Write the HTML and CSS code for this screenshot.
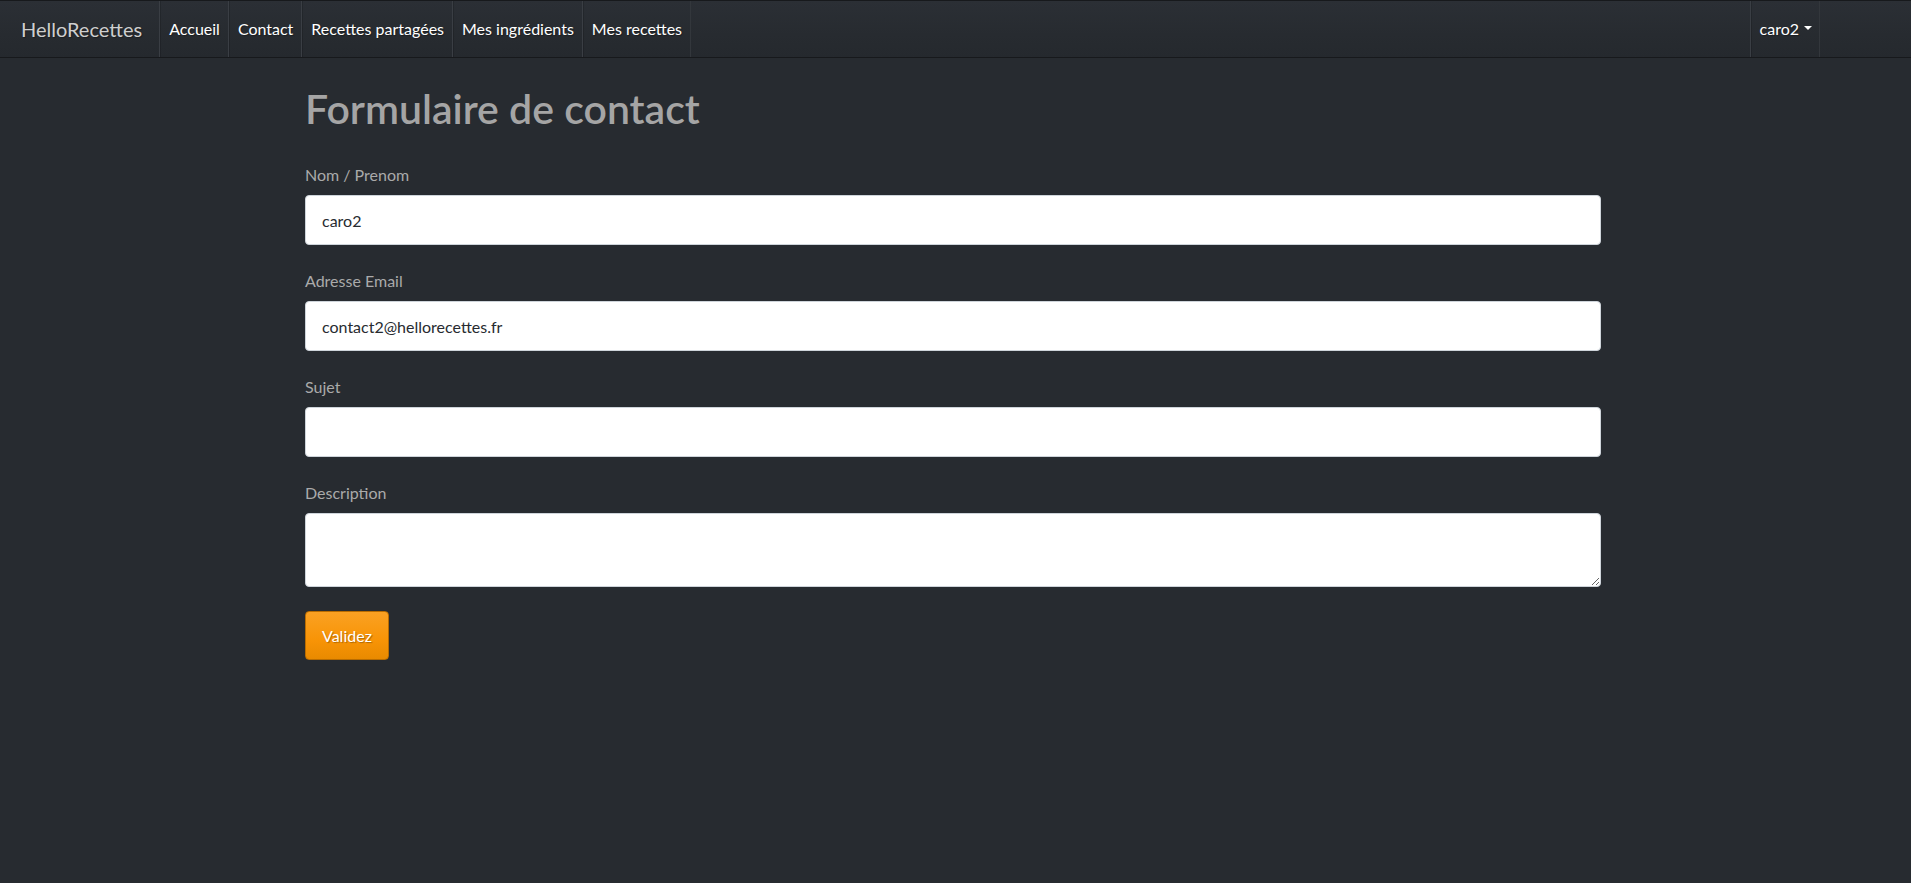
FILE: index.html
```html
<!DOCTYPE html>
<html lang="fr">
<head>
<meta charset="utf-8">
<title>Formulaire de contact</title>
<link rel="stylesheet" href="styles.css">
</head>
<body>
<nav class="navbar">
  <a class="brand" href="#">HelloRecettes</a>
  <ul class="nav">
    <li><a class="nav-link" href="#">Accueil</a></li>
    <li><a class="nav-link" href="#">Contact</a></li>
    <li><a class="nav-link" href="#">Recettes partagées</a></li>
    <li><a class="nav-link" href="#">Mes ingrédients</a></li>
    <li><a class="nav-link last" href="#">Mes recettes</a></li>
  </ul>
  <ul class="nav nav-right">
    <li><a class="nav-link last dropdown" href="#">caro2<span class="caret"></span></a></li>
  </ul>
</nav>
<main class="page">
  <div class="container">
    <h1 class="title">Formulaire de contact</h1>
    <form class="form">
      <div class="group">
        <label class="label" for="nom">Nom / Prenom</label>
        <input class="control" id="nom" type="text" value="caro2">
      </div>
      <div class="group">
        <label class="label" for="email">Adresse Email</label>
        <input class="control" id="email" type="email" value="contact2@hellorecettes.fr">
      </div>
      <div class="group">
        <label class="label" for="sujet">Sujet</label>
        <input class="control" id="sujet" type="text">
      </div>
      <div class="group">
        <label class="label" for="desc">Description</label>
        <textarea class="control area" id="desc" rows="2"></textarea>
      </div>
      <button class="btn-warning" type="submit">Validez</button>
    </form>
  </div>
</main>
</body>
</html>
```

FILE: styles.css
```css
* { box-sizing: border-box; }
html, body { margin: 0; padding: 0; }
body {
  background: #272b30;
  color: #aaa;
  font-family: "Lato", "Open Sans", "DejaVu Sans", sans-serif;
  font-size: 16px;
  line-height: 1.5;
  min-height: 883px;
}
.navbar {
  display: flex;
  align-items: stretch;
  height: 58px;
  border-top: 1px solid #17191c;
  border-bottom: 1px solid #17191c;
  background: linear-gradient(#2b2f35, #272b30 60%, #25292e);
  padding-left: 21px;
  padding-right: 91px;
  text-shadow: 1px 1px 1px rgba(0,0,0,.3);
}
.brand {
  display: flex;
  align-items: center;
  font-size: 20px;
  line-height: 30px;
  color: #cfcfcf;
  text-decoration: none;
  margin-right: 17px;
}
.nav {
  display: flex;
  list-style: none;
  margin: 0;
  padding: 0;
}
.nav li { display: flex; }
.nav-right { margin-left: auto; }
.nav-link {
  display: flex;
  align-items: center;
  padding: 0 8px 0 9px;
  color: #fff;
  text-decoration: none;
  border-left: 1px solid #3a3e44;
  box-shadow: inset 1px 0 0 rgba(0,0,0,.15);
}
.nav-link.last { border-right: 1px solid #33373c; }
.dropdown { padding: 0 7px 0 9px; }
.caret {
  display: inline-block;
  margin-left: 5px;
  width: 0;
  height: 0;
  border-top: 4.5px solid #fff;
  border-left: 4px solid transparent;
  border-right: 4px solid transparent;
  margin-top: -2px;
}
.page { padding-right: 5px; }
.container {
  width: 1296px;
  margin: 0 auto;
  padding-top: 27px;
}
.title {
  margin: 0 0 8px 0;
  font-size: 41px;
  line-height: 48px;
  font-weight: 600;
  color: #a5a5a5;
}
.form { margin-top: 30px; }
.group { margin-bottom: 24px; }
.label {
  display: block;
  margin-bottom: 8px;
  color: #aaa;
}
.control {
  display: block;
  width: 100%;
  height: 50px;
  padding: 12px 16px;
  font-family: inherit;
  font-size: 16px;
  line-height: 24px;
  color: #272b30;
  background: #fff;
  border: 1px solid #ced4da;
  border-radius: 4px;
  outline: none;
}
.area {
  height: 74px;
  resize: vertical;
}
.btn-warning {
  display: inline-block;
  height: 49px;
  padding: 0 16px;
  font-family: inherit;
  font-size: 16px;
  line-height: 24px;
  color: #fff;
  background: linear-gradient(#faa123, #f89406 60%, #e98a00);
  border: 1px solid #b96c00;
  border-radius: 4px;
  text-shadow: 1px 1px 1px rgba(0,0,0,.3);
}
```
